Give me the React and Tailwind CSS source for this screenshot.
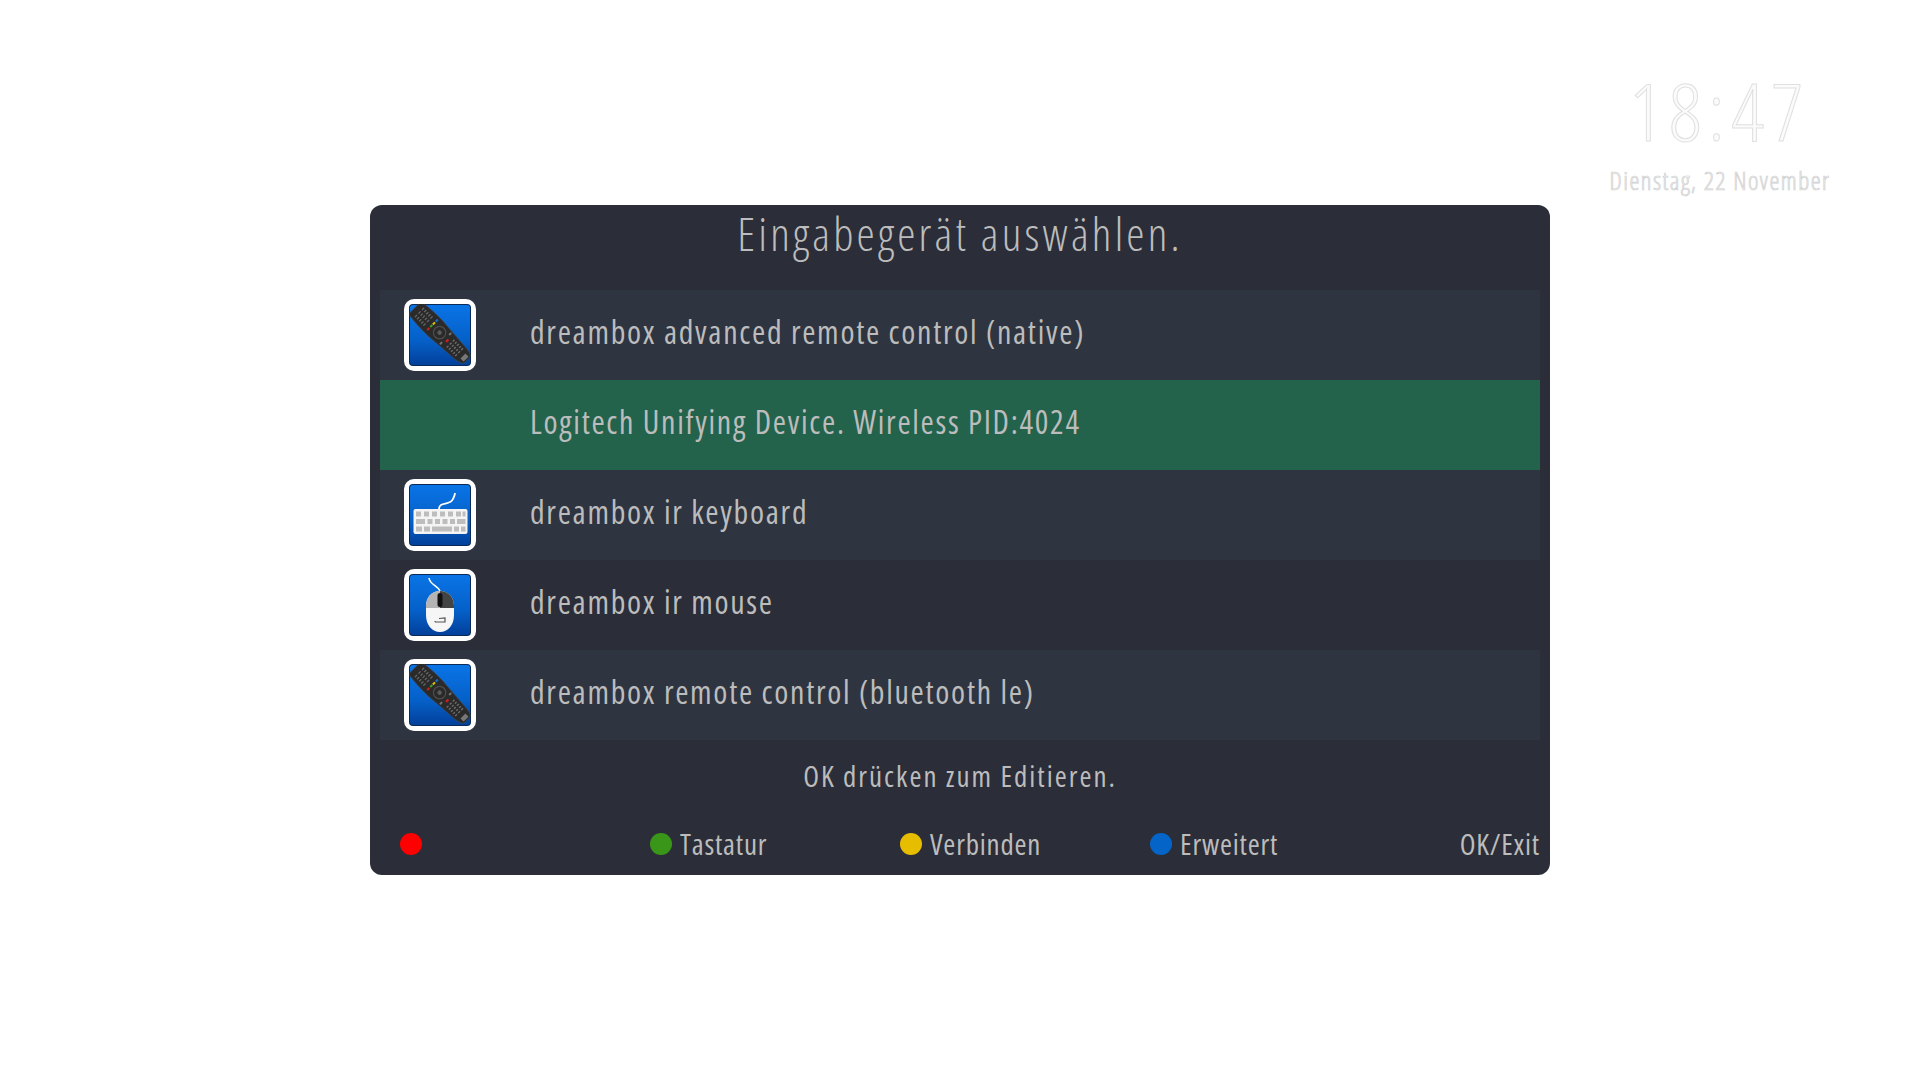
import React from "react";

const font = "font-['Open_Sans','Noto_Sans',sans-serif] [font-stretch:75%]";

// blue tile with the white rounded frame, shared by all device icons
const IconTile = ({ id, children }) => (
  <svg width="72" height="72" viewBox="0 0 72 72" className="block">
    <defs>
      <linearGradient id={id} x1="0" y1="0" x2="0" y2="1">
        <stop offset="0" stopColor="#0a74e6" />
        <stop offset="0.6" stopColor="#0560c8" />
        <stop offset="1" stopColor="#03409a" />
      </linearGradient>
    </defs>
    <rect x="0" y="0" width="72" height="72" rx="10" fill="#fff" />
    <rect x="5" y="5" width="62" height="62" rx="4" fill="#0b2a55" />
    <rect x="6" y="6" width="60" height="60" rx="3" fill={`url(#${id})`} />
    {children}
  </svg>
);

const RemoteIcon = ({ id }) => (
  <IconTile id={id}>
    <svg x="5" y="5" width="62" height="62" viewBox="5 5 62 62">
      <g transform="rotate(-45 37 35) translate(37 35)">
        <path d="M-9 -37 L9 -37 Q11 -20 10.5 -8 Q9 10 8 26 Q7.5 35 4 37 L-4 37 Q-7.5 35 -8 26 Q-9 10 -10.5 -8 Q-11 -20 -9 -37 Z" fill="#2a2a2a" stroke="#444" strokeWidth="0.7" />
        {[-31, -28, -25, -22, -19].map((y) => (
          <g key={y} fill="#6b6b6b">
            <rect x="-6.5" y={y} width="3" height="1.2" />
            <rect x="-1.5" y={y} width="3" height="1.2" />
            <rect x="3.5" y={y} width="3" height="1.2" />
          </g>
        ))}
        <rect x="-7" y="-13.5" width="3" height="2" fill="#d02020" />
        <rect x="-2.8" y="-13.5" width="3" height="2" fill="#3aa020" />
        <rect x="1" y="-13.5" width="3" height="2" fill="#e0c000" />
        <rect x="5" y="-13.5" width="3" height="2" fill="#1a70d0" />
        <circle cx="0" cy="-2" r="6.2" fill="none" stroke="#4e4e4e" strokeWidth="1.2" />
        <circle cx="0" cy="-2" r="2.2" fill="#5a5a5a" />
        <rect x="-8" y="5.5" width="3" height="2" fill="#707070" />
        <rect x="5" y="5.5" width="3" height="2" fill="#707070" />
        <rect x="-2" y="8" width="3.4" height="2.2" fill="#d02020" />
        {[13, 16, 19, 22, 25].map((y) => (
          <g key={y} fill="#707070">
            <rect x="-5.5" y={y} width="2.4" height="1.3" />
            <rect x="-1.2" y={y} width="2.4" height="1.3" />
            <rect x="3" y={y} width="2.4" height="1.3" />
          </g>
        ))}
        <rect x="-3.5" y="31" width="7" height="4.5" fill="#777" />
      </g>
    </svg>
  </IconTile>
);

const KeyboardIcon = ({ id }) => (
  <IconTile id={id}>
    <path d="M35 30 C35 22 46 27 49 20 C50 18 51 16 51 14" fill="none" stroke="#fff" strokeWidth="1.8" />
    <rect x="9.5" y="30" width="54" height="25" rx="2" fill="#f4f4f4" />
    {[12, 20, 28, 36, 44, 52].map((x) => (
      <rect key={x} x={x} y="32.5" width="5" height="5" fill="#bdbdbd" />
    ))}
    <rect x="58.5" y="32.5" width="3" height="5" fill="#bdbdbd" />
    <rect x="12" y="40" width="9" height="5" fill="#bdbdbd" />
    {[23.5, 31, 38.5, 46].map((x) => (
      <rect key={x} x={x} y="40" width="5" height="5" fill="#bdbdbd" />
    ))}
    <rect x="53" y="40" width="8.5" height="5" fill="#bdbdbd" />
    <rect x="12" y="47.5" width="6" height="5" fill="#bdbdbd" />
    <rect x="20" y="47.5" width="6" height="5" fill="#bdbdbd" />
    <rect x="28" y="47.5" width="20" height="5" fill="#bdbdbd" />
    <rect x="50" y="47.5" width="5" height="5" fill="#bdbdbd" />
    <rect x="57" y="47.5" width="4.5" height="5" fill="#bdbdbd" />
  </IconTile>
);

const MouseIcon = ({ id }) => (
  <IconTile id={id}>
    <path d="M25 9 C26 16 33 16 36 22" fill="none" stroke="#fff" strokeWidth="1.6" />
    <path d="M36 22 C27 22 22 29 22 37 L22 46 C22 56 28 63 36 63 C44 63 50 56 50 46 L50 37 C50 29 45 22 36 22 Z" fill="#f6f6f6" />
    <path d="M36 22 C27 22 22 29 22 37 L22 39 L36 39 Z" fill="#b4b4b4" />
    <path d="M36 22 C45 22 50 29 50 37 L50 39 L36 39 Z" fill="#444" />
    <rect x="33.5" y="24" width="5" height="14" rx="2.5" fill="#111" />
    <path d="M31 53 L41 53 L41 49 L35 49.5 M31 53 L31 52" fill="none" stroke="#555" strokeWidth="1.2" />
  </IconTile>
);

const rows = [
  { label: "dreambox advanced remote control (native)", icon: <RemoteIcon id="tile-a" />, bg: "bg-[#2e3440]" },
  { label: "Logitech Unifying Device. Wireless PID:4024", icon: null, bg: "bg-[#23634c]" },
  { label: "dreambox ir keyboard", icon: <KeyboardIcon id="tile-b" />, bg: "bg-[#2e3440]" },
  { label: "dreambox ir mouse", icon: <MouseIcon id="tile-c" />, bg: "bg-[#2b2d38]" },
  { label: "dreambox remote control (bluetooth le)", icon: <RemoteIcon id="tile-d" />, bg: "bg-[#2e3440]" },
];

const keys = [
  { label: "", dot: "bg-[#fe0000]" },
  { label: "Tastatur", dot: "bg-[#3a9618]" },
  { label: "Verbinden", dot: "bg-[#e7bd00]" },
  { label: "Erweitert", dot: "bg-[#0564c8]" },
];

export default function App() {
  return (
    <div className={`relative min-h-screen bg-white pt-[205px] ${font}`}>
      {/* clock, outlined like the skin draws it */}
      <div className="absolute left-[1600px] top-[58px] w-[240px] flex flex-col items-center text-[#fbfbfb]">
        <div className="text-[80px] leading-[104px] font-light tracking-[7px] [-webkit-text-stroke:1px_#e0e0e0]">18:47</div>
        <div className="mt-[3px] text-[25px] leading-[30px] whitespace-nowrap font-light tracking-[1.5px] [-webkit-text-stroke:0.7px_#d0d0d0]">
          Dienstag, 22 November
        </div>
      </div>

      <div className="mx-auto w-[1180px] h-[670px] rounded-[12px] bg-[#2b2d38] px-[10px] text-[#bcbcbc] flex flex-col">
        <h1 className="h-[85px] flex items-start justify-center text-[46px] leading-[56px] font-light tracking-[3.2px]">
          Eingabegerät auswählen.
        </h1>
        <div className="flex flex-col">
          {rows.map((row) => (
            <div key={row.label} className={`h-[90px] flex items-center ${row.bg}`}>
              <div className="w-[150px] pl-[24px] shrink-0">{row.icon}</div>
              <div className="text-[32px] leading-[36px] tracking-[1.7px] -mt-[6px]">{row.label}</div>
            </div>
          ))}
        </div>
        <div className="h-[72px] flex items-center justify-center text-[29px] tracking-[2px]">OK drücken zum Editieren.</div>
        <div className="mt-[10px] pl-[20px] flex items-center h-[44px]">
          {keys.map((key) => (
            <div key={key.dot} className="w-[250px] flex items-center gap-[8px]">
              <span className={`w-[22px] h-[22px] rounded-full ${key.dot}`} />
              <span className="text-[29px] leading-[34px] tracking-[0.8px]">{key.label}</span>
            </div>
          ))}
          <div className="flex-1 text-right text-[29px] leading-[34px] tracking-[0.8px]">OK/Exit</div>
        </div>
      </div>
    </div>
  );
}
